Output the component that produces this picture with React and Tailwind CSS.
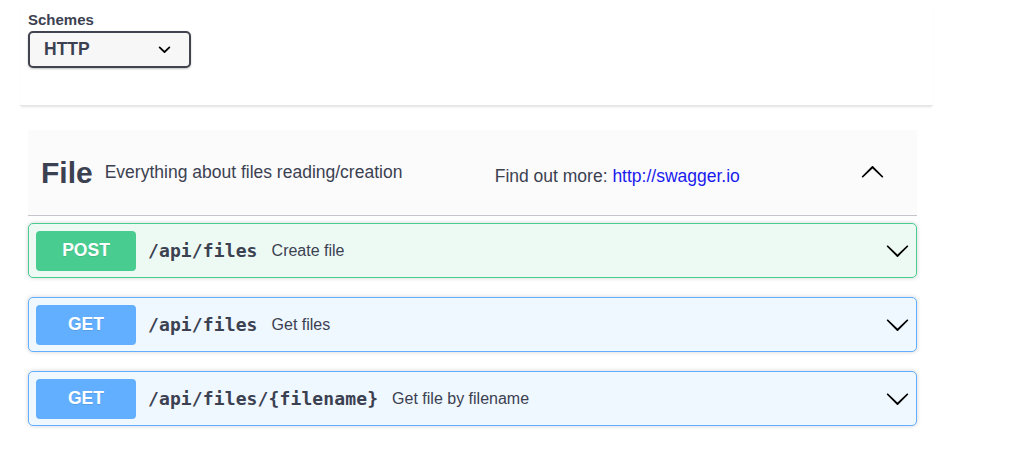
import React from 'react';

const sans = "font-['Liberation_Sans',Arial,sans-serif]";
const mono = "font-['DejaVu_Sans_Mono',monospace]";

function Arrow({ className = '' }) {
  return (
    <svg viewBox="0 0 20 20" className={`w-[25px] h-[25px] shrink-0 ${className}`} aria-hidden="true">
      <path
        fill="#000"
        d="M17.418 6.109c.272-.268.709-.268.979 0s.271.701 0 .969l-7.908 7.83c-.27.268-.707.268-.979 0l-7.908-7.83c-.27-.268-.27-.701 0-.969.271-.268.709-.268.979 0L10 13.25l7.418-7.141z"
      />
    </svg>
  );
}

const ops = [
  { method: 'POST', path: '/api/files', desc: 'Create file', kind: 'post' },
  { method: 'GET', path: '/api/files', desc: 'Get files', kind: 'get' },
  { method: 'GET', path: '/api/files/{filename}', desc: 'Get file by filename', kind: 'get' },
];

function OpBlock({ op }) {
  const isPost = op.kind === 'post';
  return (
    <div
      className={`h-[55px] flex items-center pl-[7px] pr-[6px] rounded-[5px] border shadow-[0_0_4px_rgba(0,0,0,0.19)] ${
        isPost ? 'border-[#49cc90] bg-[#edfaf4]' : 'border-[#61affe] bg-[#eff7ff]'
      }`}
    >
      <span
        className={`w-[100px] h-[40px] rounded-[4px] flex items-center justify-center text-white font-bold text-[17.5px] [text-shadow:0_1px_0_rgba(0,0,0,0.1)] ${sans} ${
          isPost ? 'bg-[#49cc90]' : 'bg-[#61affe]'
        }`}
      >
        {op.method}
      </span>
      <span className={`ml-[12px] text-[18px] font-bold tracking-[0.12px] text-[#3b4151] ${mono}`}>{op.path}</span>
      <span className={`ml-[14px] text-[16px] text-[#3b4151] ${sans}`}>{op.desc}</span>
      <Arrow className="ml-auto" />
    </div>
  );
}

export default function App() {
  return (
    <div className={`w-[1022px] h-[456px] bg-white overflow-hidden ${sans} text-[#3b4151]`}>
      {/* scheme container */}
      <div className="ml-[20px] w-[913px] h-[106px] bg-white border-b border-[#e6e6e6] shadow-[0_2px_2px_-1px_rgba(0,0,0,0.12)] pt-[11px] pl-[8px]">
        <div className="text-[15px] leading-[18px] font-bold">Schemes</div>
        <div className="mt-[2px] w-[163px] h-[37px] border-2 border-[#41444e] rounded-[5px] bg-[#f7f7f7] shadow-[0_1px_2px_0_rgba(0,0,0,0.25)] flex items-center pl-[14px] pr-[12px]">
          <span className="text-[17.5px] font-bold text-[#3b4151]">HTTP</span>
          <svg viewBox="0 0 20 20" className="ml-auto w-[25px] h-[25px]" aria-hidden="true">
            <path
              fill="#000"
              d="M13.418 7.859a.695.695 0 01.978 0 .68.68 0 010 .969l-3.908 3.83a.697.697 0 01-.979 0l-3.908-3.83a.68.68 0 010-.969.695.695 0 01.978 0L10 11l3.418-3.141z"
            />
          </svg>
        </div>
      </div>

      {/* tag section */}
      <div className="ml-[28px] w-[889px] mt-[24px]">
        <div className="h-[86px] bg-[#fbfbfb] border-b border-[#c4c6cb] flex items-center pl-[13px] pr-[32px]">
          <span className="text-[30px] font-bold leading-none text-[#3b4151]">File</span>
          <span className="ml-[12px] w-[390px] text-[17.5px] text-[#3b4151]">Everything about files reading/creation</span>
          <span className="flex-1 pt-[8px] text-[17.5px] text-[#3b4151]">
            Find out more: <span className="text-[#1a1aee]">http://swagger.io</span>
          </span>
          <Arrow className="rotate-180" />
        </div>

        <div className="mt-[7px] flex flex-col gap-[19px]">
          {ops.map((op, i) => (
            <OpBlock key={i} op={op} />
          ))}
        </div>
      </div>
    </div>
  );
}
